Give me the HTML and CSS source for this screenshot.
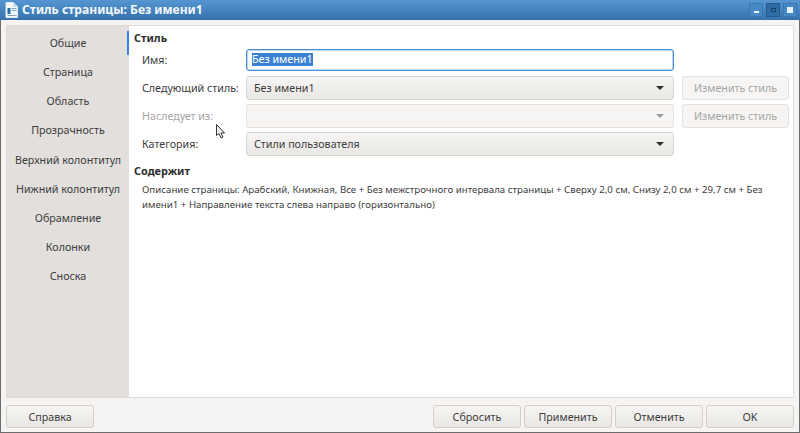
FILE: index.html
```html
<!DOCTYPE html>
<html lang="ru">
<head>
<meta charset="utf-8">
<title>Стиль страницы</title>
<link rel="stylesheet" href="styles.css">
</head>
<body>
<div class="window">
  <header class="titlebar">
    <svg class="app-icon" width="13" height="16" viewBox="0 0 13 16">
      <path d="M1 .5H8.5L12.5 4.5V15.5H1Z" fill="#f4f8fb" stroke="#dfe8ee"/>
      <path d="M8.5 .5V4.5H12.5Z" fill="#b9cfe0"/>
      <rect x="2.500" y="6" width="3" height="6" fill="#1d6fa8"/>
      <rect x="6.500" y="6" width="5" height="1" fill="#7fa6c2"/>
      <rect x="6.500" y="8" width="5" height="1" fill="#7fa6c2"/>
      <rect x="2.500" y="13" width="9" height="1" fill="#7fa6c2"/>
    </svg>
    <span class="title-text">Стиль страницы: Без имени1</span>
    <div class="wm-buttons">
      <span class="wm-btn"><span class="wm-min"></span></span>
      <span class="wm-btn wm-active"><span class="wm-max"></span></span>
      <span class="wm-btn"><span class="wm-close"></span></span>
    </div>
  </header>
  <div class="body">
    <div class="panel">
      <nav class="sidebar">
        <div class="tab">Общие</div>
        <div class="tab">Страница</div>
        <div class="tab">Область</div>
        <div class="tab">Прозрачность</div>
        <div class="tab">Верхний колонтитул</div>
        <div class="tab">Нижний колонтитул</div>
        <div class="tab">Обрамление</div>
        <div class="tab">Колонки</div>
        <div class="tab">Сноска</div>
      </nav>
      <main class="content">
        <span class="active-mark"></span>
        <h2 class="heading">Стиль</h2>
        <div class="form">
          <label class="label">Имя:</label>
          <div class="input"><span class="selected">Без имени1</span></div>
          <span></span>

          <label class="label">Следующий стиль:</label>
          <div class="select"><span>Без имени1</span><i class="arrow"></i></div>
          <button class="btn btn-off edit">Изменить стиль</button>

          <label class="label label-off">Наследует из:</label>
          <div class="select select-off"><span></span><i class="arrow arrow-off"></i></div>
          <button class="btn btn-off edit">Изменить стиль</button>

          <label class="label">Категория:</label>
          <div class="select"><span>Стили пользователя</span><i class="arrow"></i></div>
          <span></span>
        </div>
        <h2 class="heading heading-2">Содержит</h2>
        <p class="description">Описание страницы: Арабский, Книжная, Все + Без межстрочного интервала страницы + Сверху 2,0 см, Снизу 2,0 см + 29,7 см + Без имени1 + Направление текста слева направо (горизонтально)</p>
        <svg class="cursor" width="10" height="15" viewBox="0 0 10 15">
          <path d="M.5 .5V11.5L3 9.500L5 14L7 13L5 9H8.500Z" fill="#f2f2f2" stroke="#333" stroke-width="1"/>
        </svg>
      </main>
    </div>
    <footer class="actions">
      <button class="btn help">Справка</button>
      <span class="spacer"></span>
      <button class="btn action">Сбросить</button>
      <button class="btn action">Применить</button>
      <button class="btn action">Отменить</button>
      <button class="btn action">OK</button>
    </footer>
  </div>
</div>
</body>
</html>
```
FILE: styles.css
```css
* { box-sizing: border-box; }
html, body { margin: 0; padding: 0; }
body { width: 800px; height: 433px; overflow: hidden; font-family: "Noto Sans", "Open Sans", sans-serif; font-size: 10.7px; color: #3d3d3d; background: #f5f4f2; }
.window { width: 800px; height: 433px; display: flex; flex-direction: column; border: 1px solid #6d6d6d; border-top: 0; }
.titlebar { height: 20px; flex: none; display: flex; align-items: center; margin: 0 -1px; padding: 0 3px 0 5px; background: linear-gradient(#5596d2, #3572ad); color: #f4f8fc; }
.app-icon { flex: none; }
.title-text { margin-left: 4px; font-weight: 700; font-size: 12.1px; line-height: 20px; }
.wm-buttons { margin-left: auto; display: flex; gap: 3px; }
.wm-btn { width: 14px; height: 14px; display: flex; align-items: center; justify-content: center; background: #4688c4; border: 1px solid #3a78b2; }
.wm-active { background: #2f6ca6; border-color: #27598a; }
.wm-min { width: 5px; height: 2px; margin-top: 4px; background: #e8f0f8; }
.wm-max { width: 5px; height: 4px; border: 1px solid #16456f; }
.wm-close { width: 6px; height: 6px; background: #e8f0f8; }
.body { flex: 1; display: flex; flex-direction: column; padding: 5px 5px 4px; min-height: 0; }
.panel { flex: 1; display: flex; min-height: 0; border: 1px solid #dfdcd8; background: #fff; }
.sidebar { width: 122px; flex: none; background: #e2dfdc; padding-top: 3px; }
.tab { height: 29.15px; line-height: 29px; text-align: center; white-space: nowrap; color: #3d3d3d; }
.content { flex: 1; position: relative; padding: 4px 4px 0 5px; }
.active-mark { position: absolute; left: -2px; top: 5px; width: 2px; height: 24px; background: #3584e4; }
.heading { margin: 0; font-size: 10.9px; font-weight: 700; line-height: 16px; color: #2e2e2e; }
.heading-2 { margin-top: 7px; }
.form { display: grid; grid-template-columns: 96px 428px 107px; column-gap: 8px; row-gap: 4px; padding-left: 8px; margin-top: 2px; grid-auto-rows: 24px; align-items: center; }
.label { white-space: nowrap; }
.label-off { color: #a5a5a5; }
.input { height: 22px; border: 1px solid #4a90d9; border-radius: 3px; padding: 2px 5px; line-height: 14px; box-shadow: inset 0 0 0 1px #bcd6f0; background: #fff; align-self: center; }
.selected { display: inline-block; height: 13px; line-height: 13px; background: #3a83d3; color: #fff; }
.select { height: 24px; display: flex; align-items: center; justify-content: space-between; padding: 0 9px 0 7px; border: 1px solid #d9d6d2; border-radius: 3px; background: linear-gradient(#f6f5f3, #e9e7e4); }
.select-off { background: #f6f5f3; border-color: #e4e1de; }
.arrow { width: 0; height: 0; border-left: 4px solid transparent; border-right: 4px solid transparent; border-top: 4px solid #2e2e2e; }
.arrow-off { border-top-color: #9d9d9d; }
.btn { font: inherit; color: #3d3d3d; height: 23px; padding: 0; border: 1px solid #d3d0cc; border-radius: 3px; background: linear-gradient(#f6f5f3, #e9e7e4); white-space: nowrap; }
.btn-off { color: #a5a5a5; background: #f6f5f3; border-color: #e4e1de; }
.edit { width: 107px; height: 24px; }
.description { margin: 3px 0 0 8px; width: 640px; font-size: 9.7px; line-height: 15px; color: #3d3d3d; }
.cursor { position: absolute; left: 87px; top: 98px; }
.actions { flex: none; display: flex; gap: 3px; padding-top: 7px; align-items: center; }
.help { width: 88px; }
.spacer { flex: 1; }
.action { width: 88px; }
```
